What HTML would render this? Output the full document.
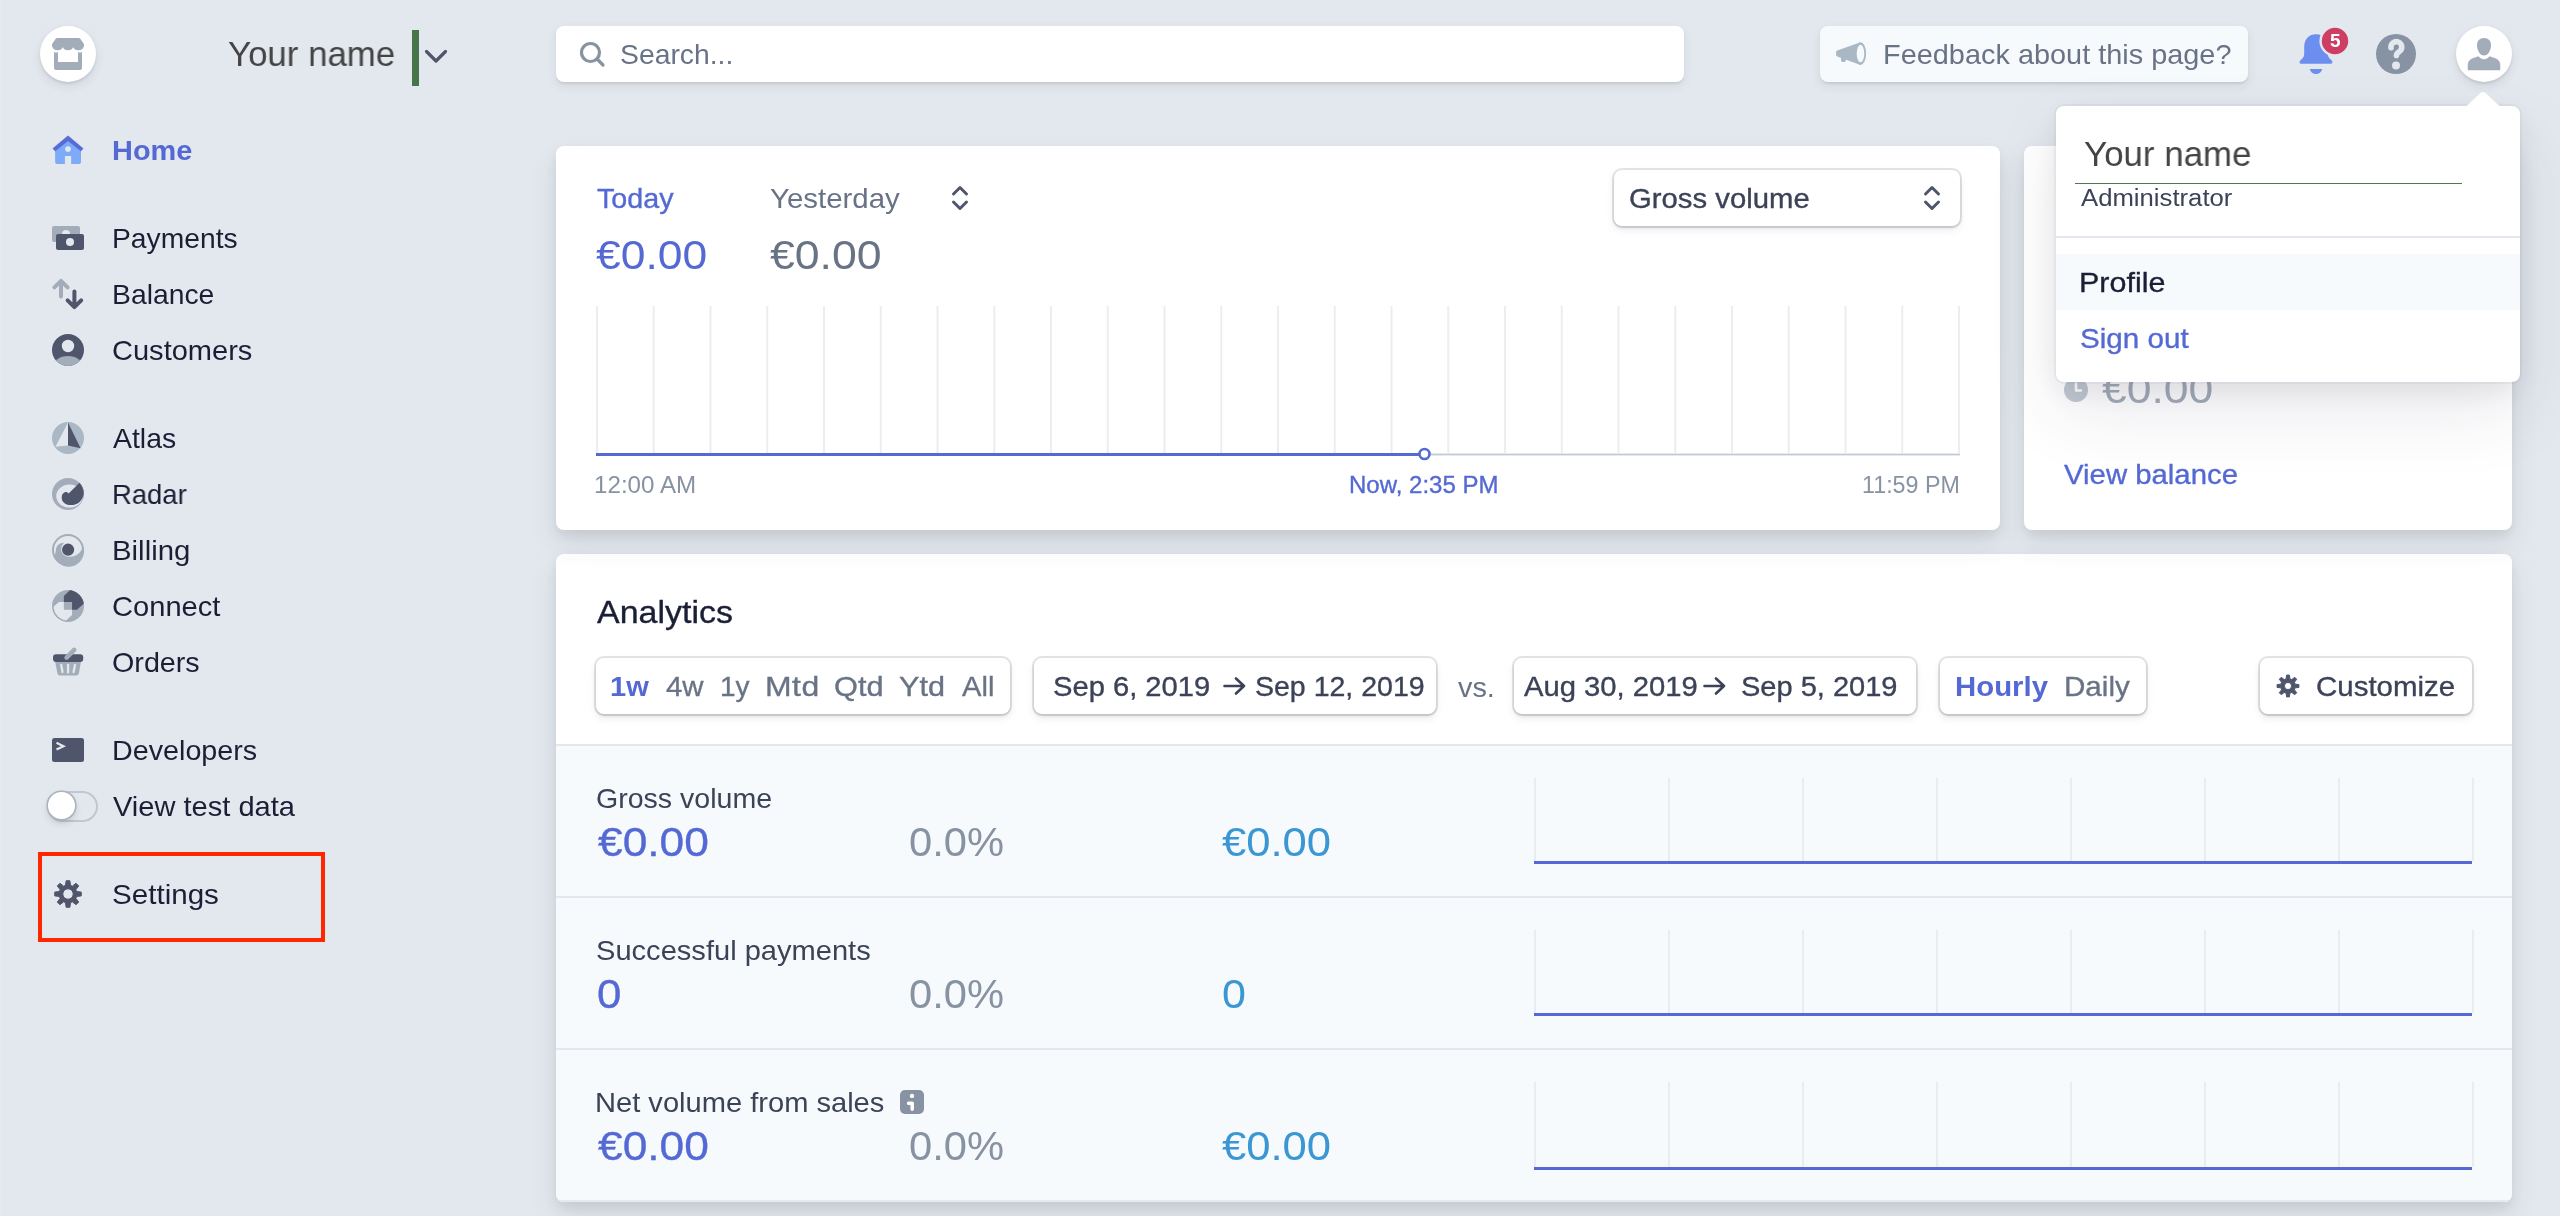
<!DOCTYPE html>
<html><head><meta charset="utf-8"><title>Dashboard</title>
<style>
html,body{margin:0;padding:0}
body{width:2560px;height:1216px;overflow:hidden;background:#e3e8ee;font-family:"Liberation Sans",sans-serif;position:relative}
.t{position:absolute;white-space:pre;line-height:1;transform-origin:0 0;will-change:transform;font-family:"Liberation Sans",sans-serif}
.a{position:absolute}
.card{position:absolute;background:#fff;border-radius:8px;box-shadow:0 14px 28px 0 rgba(60,66,87,.10),0 6px 12px 0 rgba(0,0,0,.07)}
.btn{position:absolute;background:#fff;border-radius:8px;box-shadow:0 0 0 2px rgba(60,66,87,.14),0 4px 8px 0 rgba(60,66,87,.10),0 2px 3px 0 rgba(0,0,0,.10)}
svg{position:absolute;overflow:visible}
</style></head>
<body>
<!-- left edge strip -->
<div class="a" style="left:0;top:0;width:1px;height:1216px;background:#e6e9ed"></div>

<!-- logo circle -->
<div class="a" style="left:40px;top:26px;width:56px;height:56px;border-radius:50%;background:#fff;box-shadow:0 4px 10px 0 rgba(60,66,87,.12),0 2px 2px 0 rgba(0,0,0,.08)"></div>
<svg style="left:52px;top:38px" width="32" height="32" viewBox="0 0 32 32">
<path d="M5.2 0 H26.8 Q27.8 0 28.3 0.8 L31.6 6 V8 H0.4 V6 L3.7 0.8 Q4.2 0 5.2 0 Z" fill="#a3acb9"/>
<ellipse cx="5.6" cy="7.5" rx="5.6" ry="4.8" fill="#a3acb9"/><ellipse cx="16" cy="7.5" rx="5.6" ry="4.8" fill="#a3acb9"/><ellipse cx="26.4" cy="7.5" rx="5.6" ry="4.8" fill="#a3acb9"/>
<path d="M2 14 Q4 15 6 14 V24 H26 V14 Q28 15 30 14 V30 Q30 32 28 32 H4 Q2 32 2 30 Z" fill="#a3acb9"/>
</svg>

<!-- green caret + chevron -->
<div class="a" style="left:412px;top:30px;width:7px;height:56px;background:#47754a"></div>
<svg style="left:424px;top:48px" width="24" height="16" viewBox="0 0 24 16"><path d="M2.5 3.5 L12 13 L21.5 3.5" fill="none" stroke="#4f566b" stroke-width="3.2" stroke-linecap="round" stroke-linejoin="round"/></svg>

<!-- search -->
<div class="a" style="left:556px;top:26px;width:1128px;height:56px;border-radius:8px;background:#fff;box-shadow:0 4px 10px 0 rgba(60,66,87,.10),0 2px 2px 0 rgba(0,0,0,.07)"></div>
<svg style="left:578px;top:40px" width="28" height="28" viewBox="0 0 28 28"><circle cx="12.5" cy="12.5" r="9" fill="none" stroke="#8792a2" stroke-width="3.2"/><path d="M19 19 L25 25" stroke="#8792a2" stroke-width="3.2" stroke-linecap="round"/></svg>

<!-- feedback -->
<div class="a" style="left:1820px;top:26px;width:428px;height:56px;border-radius:8px;background:#f7fafc;box-shadow:0 4px 10px 0 rgba(60,66,87,.10),0 2px 2px 0 rgba(0,0,0,.07)"></div>
<svg style="left:1834px;top:40px" width="36" height="28" viewBox="0 0 36 28">
<path d="M3.2 10.6 L26.5 2.3 V24.9 L3.2 16.4 Q2.1 16 2.1 14.8 V12.2 Q2.1 11 3.2 10.6 Z" fill="#aab7c4"/>
<path d="M7 17 V20.5 Q7 21.9 8.4 21.9 H10.4 Q11.8 21.9 11.8 20.5 V18.5 Z" fill="#aab7c4"/>
<ellipse cx="26.5" cy="13.6" rx="5.6" ry="11.3" fill="#aab7c4"/>
<ellipse cx="26.5" cy="13.6" rx="3.8" ry="8.75" fill="#f7fafc"/>
</svg>
<svg style="left:2296px;top:24px" width="56" height="56" viewBox="0 0 56 56">
<path d="M20 10.2 C12 10.2 8.2 16 8.2 23 V30 C8.2 33 6.5 34.5 4.5 36.2 C2.8 37.8 3.5 39.8 5.8 39.8 H34.2 C36.5 39.8 37.2 37.8 35.5 36.2 C33.5 34.5 31.8 33 31.8 30 V23 C31.8 16 28 10.2 20 10.2 Z" fill="#6c8eef"/>
<path d="M13.8 45 H26.2 C25.4 48.2 23 50 20 50 C17 50 14.6 48.2 13.8 45 Z" fill="#6c8eef"/>
<circle cx="39" cy="17" r="15.6" fill="#e3e8ee"/>
<circle cx="39" cy="17" r="13.2" fill="#cd3d64"/>
</svg>
<span class="t" style="left:2329.6px;top:31.2px;font-size:19px;font-weight:700;color:#fff">5</span>
<svg style="left:2376px;top:34px" width="40" height="40" viewBox="0 0 40 40">
<circle cx="20" cy="20" r="20" fill="#8792a2"/>
<path d="M15 13.8 A5.4 5.4 0 1 1 23.8 17.2 C22 18.6 20.4 19.2 20.4 21.4" fill="none" stroke="#e3e8ee" stroke-width="5.6" stroke-linecap="round" stroke-linejoin="round"/>
<circle cx="20" cy="31.4" r="4" fill="#e3e8ee"/>
</svg>
<!-- avatar -->
<div class="a" style="left:2456px;top:26px;width:56px;height:56px;border-radius:50%;background:#fff;box-shadow:0 4px 10px 0 rgba(60,66,87,.12),0 2px 2px 0 rgba(0,0,0,.08)"></div>
<svg style="left:2464px;top:34px" width="40" height="40" viewBox="0 0 40 40">
<path d="M4 36 V31 C4 27 6.5 25.2 10 24 L14.5 22.6 C16 24.6 18 25.4 20 25.4 C22 25.4 24 24.6 25.5 22.6 L30 24 C33.5 25.2 36 27 36 31 V36 Z" fill="#a3acb9" stroke="#a3acb9" stroke-width="0.5" stroke-linejoin="round"/>
<path d="M20 3.9 C24.4 3.9 27 7 27 11 C27 16.5 24 21.6 20 21.6 C16 21.6 13 16.5 13 11 C13 7 15.6 3.9 20 3.9 Z" fill="#a3acb9"/>
</svg>

<svg style="left:52px;top:134px" width="32" height="32" viewBox="0 0 32 32"><path d="M3.13 17 L16 6.4 L29 17 V28 Q29 30 27 30 H19.16 V22.6 Q19.16 22 18.56 22 H13.52 Q12.92 22 12.92 22.6 V30 H5.13 Q3.13 30 3.13 28 Z" fill="#7dabf8"/>
<path d="M16 1.87 L31.08 14.5 L28.9 17.07 L16 6.8 L3.25 17.07 L0.9 14.5 Z" fill="#556cd6" stroke="#556cd6" stroke-width="0.6" stroke-linejoin="round"/>
<circle cx="16" cy="15" r="2.85" fill="#e3e8ee"/></svg>
<svg style="left:52px;top:222px" width="32" height="32" viewBox="0 0 32 32"><rect x="0" y="4" width="28" height="16" rx="2" fill="#a3acb9"/>
<circle cx="14" cy="12" r="4" fill="#e3e8ee"/>
<rect x="4" y="12" width="28" height="16" rx="2" fill="#4f566b"/>
<circle cx="18" cy="20" r="4" fill="#e3e8ee"/></svg>
<svg style="left:52px;top:278px" width="32" height="32" viewBox="0 0 32 32"><path d="M9 18.4 V3 M2.4 9.4 L9 2.8 L15.6 9.4" fill="none" stroke="#a3acb9" stroke-width="4" stroke-linecap="round" stroke-linejoin="round"/>
<path d="M22.4 13.4 V29 M15.6 22.4 L22.4 29.2 L29.2 22.4" fill="none" stroke="#4f566b" stroke-width="4" stroke-linecap="round" stroke-linejoin="round"/></svg>
<svg style="left:52px;top:334px" width="32" height="32" viewBox="0 0 32 32"><defs><clipPath id="cc"><circle cx="16" cy="16" r="16"/></clipPath></defs>
<circle cx="16" cy="16" r="16" fill="#4f566b"/>
<ellipse cx="16" cy="33" rx="15" ry="11" fill="#a3acb9" clip-path="url(#cc)"/>
<circle cx="16" cy="12" r="6.2" fill="#e3e8ee"/></svg>
<svg style="left:52px;top:422px" width="32" height="32" viewBox="0 0 32 32"><circle cx="16" cy="16" r="16" fill="#aab7c4"/>
<path d="M16 0.5 L3.5 24.8 L16 23.6 Z" fill="#e3e8ee"/>
<path d="M16 0.5 L28.6 26.2 L16 23.6 Z" fill="#4f566b"/></svg>
<svg style="left:52px;top:478px" width="32" height="32" viewBox="0 0 32 32"><circle cx="16" cy="16" r="16" fill="#a3acb9"/>
<ellipse cx="17.6" cy="18.05" rx="13.4" ry="11.55" fill="#e3e8ee"/>
<path d="M27.5 4.8 A16 16 0 0 1 31.8 14.7 C31.5 22 26 27.2 18.6 27.1 C13 27 9.7 23.5 9.7 19.4 C9.7 16.5 11.5 14.2 13.6 14 C15 13.9 16 14.6 16.6 15.6 Z" fill="#4f566b"/></svg>
<svg style="left:52px;top:534px" width="32" height="32" viewBox="0 0 32 32"><circle cx="16" cy="16" r="15" fill="#e3e8ee" stroke="#a3acb9" stroke-width="2"/>
<path d="M12.5 8.8 C8 8.6 3.8 11.5 3.9 16.5 C3.5 19 2.5 21 2.6 23 A15 15 0 0 0 30.9 12 C29.5 18.5 24.5 22.6 18 22.8 C12.5 22.8 9.2 19.5 9.2 15.5 C9.2 12.5 10.5 10.2 12.5 8.8 Z" fill="#a3acb9"/>
<circle cx="16.1" cy="15.7" r="6.1" fill="#4f566b"/></svg>
<svg style="left:52px;top:590px" width="32" height="32" viewBox="0 0 32 32"><defs><clipPath id="cn"><circle cx="16" cy="16" r="16"/></clipPath><clipPath id="cn2"><circle cx="16" cy="16" r="14.4"/></clipPath></defs>
<circle cx="16" cy="16" r="16" fill="#a3acb9"/>
<path d="M6.97 12.1 H11.85 V19.8 H20.06 V24.9 L15.1 29.6 L14 32 H0 V17 L1.4 16.8 Z" fill="#e3e8ee" clip-path="url(#cn2)"/>
<path d="M18.1 0 L11.85 6.1 V12.1 H20.06 V19.8 H24.9 L32 13.4 V0 Z" fill="#4f566b" clip-path="url(#cn)"/></svg>
<svg style="left:52px;top:646px" width="32" height="32" viewBox="0 0 32 32"><path d="M3.1 15.4 H28.95 L26.9 27.2 Q26.5 29.4 24.3 29.4 H8 Q5.8 29.4 5.4 27.2 Z" fill="#a3acb9"/>
<path d="M9.2 18.8 L10.5 26 M16.1 18.8 V26.4 M23 18.8 L21.6 26" stroke="#e3e8ee" stroke-width="2.3" stroke-linecap="round"/>
<rect x="1" y="8.3" width="30.2" height="7.7" rx="3" fill="#4f566b"/>
<path d="M14.6 11.6 L22.2 3.9" stroke="#a3acb9" stroke-width="4.6" stroke-linecap="round"/></svg>
<svg style="left:52px;top:734px" width="32" height="32" viewBox="0 0 32 32"><rect x="0" y="4" width="32" height="24" rx="2.5" fill="#4f566b"/>
<path d="M4.5 8.8 L11.5 12.2 L4.5 15.6" fill="none" stroke="#e3e8ee" stroke-width="2.2" stroke-linejoin="miter"/></svg>
<svg style="left:52px;top:878px" width="32" height="32" viewBox="0 0 32 32"><path d="M13.51 7.35 L14.12 2.73 L17.88 2.73 L18.49 7.35 L20.36 8.13 L24.05 5.29 L26.71 7.95 L23.87 11.64 L24.65 13.51 L29.27 14.12 L29.27 17.88 L24.65 18.49 L23.87 20.36 L26.71 24.05 L24.05 26.71 L20.36 23.87 L18.49 24.65 L17.88 29.27 L14.12 29.27 L13.51 24.65 L11.64 23.87 L7.95 26.71 L5.29 24.05 L8.13 20.36 L7.35 18.49 L2.73 17.88 L2.73 14.12 L7.35 13.51 L8.13 11.64 L5.29 7.95 L7.95 5.29 L11.64 8.13 Z M10.80 16 a5.2 5.2 0 1 0 10.4 0 a5.2 5.2 0 1 0 -10.4 0 Z" fill="#4f566b" fill-rule="evenodd" stroke="#4f566b" stroke-width="1.0" stroke-linejoin="round"/></svg>

<!-- toggle -->
<div class="a" style="left:46.5px;top:790.5px;width:51px;height:31px;border-radius:15.5px;box-sizing:border-box;border:2px solid #bfc7d1;background:#e3e8ee"></div>
<div class="a" style="left:48.3px;top:792.4px;width:26.6px;height:26.6px;border-radius:50%;background:#fff;box-shadow:0 0 0 1.6px #a9b2be,0 4px 7px 0 rgba(60,66,87,.22)"></div>

<!-- red highlight -->
<div class="a" style="left:38px;top:852px;width:287px;height:90px;box-sizing:border-box;border:4.5px solid #ff2600"></div>

<!-- analytics card -->
<div class="card" style="left:556px;top:554px;width:1956px;height:648px;overflow:hidden">
  <div class="a" style="left:0;top:190px;width:1956px;height:458px;background:#f7fafc"></div>
  <div class="a" style="left:0;top:646px;width:1956px;height:2px;background:#e6eaef"></div>
  <div class="a" style="left:0;top:190px;width:1956px;height:2px;background:#e3e8ee"></div>
  <div class="a" style="left:0;top:342px;width:1956px;height:2px;background:#e3e8ee"></div>
  <div class="a" style="left:0;top:494px;width:1956px;height:2px;background:#e3e8ee"></div>
</div>
<!-- card 1 -->
<div class="card" style="left:556px;top:146px;width:1444px;height:384px"></div>
<svg style="left:0;top:0" width="2560" height="600" viewBox="0 0 2560 600"><rect x="596.00" y="306" width="2" height="147" fill="#ebeef1"/><rect x="652.75" y="306" width="2" height="147" fill="#ebeef1"/><rect x="709.50" y="306" width="2" height="147" fill="#ebeef1"/><rect x="766.25" y="306" width="2" height="147" fill="#ebeef1"/><rect x="823.00" y="306" width="2" height="147" fill="#ebeef1"/><rect x="879.75" y="306" width="2" height="147" fill="#ebeef1"/><rect x="936.50" y="306" width="2" height="147" fill="#ebeef1"/><rect x="993.25" y="306" width="2" height="147" fill="#ebeef1"/><rect x="1050.00" y="306" width="2" height="147" fill="#ebeef1"/><rect x="1106.75" y="306" width="2" height="147" fill="#ebeef1"/><rect x="1163.50" y="306" width="2" height="147" fill="#ebeef1"/><rect x="1220.25" y="306" width="2" height="147" fill="#ebeef1"/><rect x="1277.00" y="306" width="2" height="147" fill="#ebeef1"/><rect x="1333.75" y="306" width="2" height="147" fill="#ebeef1"/><rect x="1390.50" y="306" width="2" height="147" fill="#ebeef1"/><rect x="1447.25" y="306" width="2" height="147" fill="#ebeef1"/><rect x="1504.00" y="306" width="2" height="147" fill="#ebeef1"/><rect x="1560.75" y="306" width="2" height="147" fill="#ebeef1"/><rect x="1617.50" y="306" width="2" height="147" fill="#ebeef1"/><rect x="1674.25" y="306" width="2" height="147" fill="#ebeef1"/><rect x="1731.00" y="306" width="2" height="147" fill="#ebeef1"/><rect x="1787.75" y="306" width="2" height="147" fill="#ebeef1"/><rect x="1844.50" y="306" width="2" height="147" fill="#ebeef1"/><rect x="1901.25" y="306" width="2" height="147" fill="#ebeef1"/><rect x="1958.00" y="306" width="2" height="147" fill="#ebeef1"/>
<rect x="1424" y="453.6" width="536" height="1.8" fill="#c1c9d2"/>
<rect x="596" y="453" width="828" height="3" fill="#5469d4"/>
<circle cx="1424.5" cy="454" r="5" fill="#fff" stroke="#5469d4" stroke-width="2.6"/>
</svg>
<svg style="left:950px;top:184px" width="20" height="28" viewBox="0 0 20 28"><path d="M3.5 10 L10 3.5 L16.5 10 M3.5 18 L10 24.5 L16.5 18" fill="none" stroke="#4f566b" stroke-width="3" stroke-linecap="round" stroke-linejoin="round"/></svg>
<div class="btn" style="left:1614px;top:170px;width:346px;height:56px"></div>
<svg style="left:1922px;top:184px" width="20" height="28" viewBox="0 0 20 28"><path d="M3.5 10 L10 3.5 L16.5 10 M3.5 18 L10 24.5 L16.5 18" fill="none" stroke="#4f566b" stroke-width="3" stroke-linecap="round" stroke-linejoin="round"/></svg>

<!-- card 2 -->
<div class="card" style="left:2024px;top:146px;width:488px;height:384px"></div>
<svg style="left:2064px;top:378px" width="24" height="24" viewBox="0 0 24 24"><circle cx="12" cy="12" r="12" fill="#c1c9d2"/><path d="M12 5.5 V12.5 H17" fill="none" stroke="#fff" stroke-width="2.6" stroke-linecap="round" stroke-linejoin="round"/></svg>

<div class="btn" style="left:596px;top:658px;width:414px;height:56px"></div>
<div class="btn" style="left:1034px;top:658px;width:402px;height:56px"></div>
<div class="btn" style="left:1514px;top:658px;width:402px;height:56px"></div>
<div class="btn" style="left:1940px;top:658px;width:206px;height:56px"></div>
<div class="btn" style="left:2260px;top:658px;width:212px;height:56px"></div>
<svg style="left:1223px;top:676px" width="24" height="20" viewBox="0 0 24 20"><path d="M1.5 10 H21 M13 2.5 L21 10 L13 17.5" fill="none" stroke="#3c4257" stroke-width="2.6" stroke-linecap="round" stroke-linejoin="round"/></svg><svg style="left:1703px;top:676px" width="24" height="20" viewBox="0 0 24 20"><path d="M1.5 10 H21 M13 2.5 L21 10 L13 17.5" fill="none" stroke="#3c4257" stroke-width="2.6" stroke-linecap="round" stroke-linejoin="round"/></svg>
<svg style="left:2276px;top:674px" width="24" height="24" viewBox="0 0 24 24"><path d="M10.13 4.84 L10.59 1.09 L13.41 1.09 L13.87 4.84 L15.74 5.61 L18.72 3.29 L20.71 5.28 L18.39 8.26 L19.16 10.13 L22.91 10.59 L22.91 13.41 L19.16 13.87 L18.39 15.74 L20.71 18.72 L18.72 20.71 L15.74 18.39 L13.87 19.16 L13.41 22.91 L10.59 22.91 L10.13 19.16 L8.26 18.39 L5.28 20.71 L3.29 18.72 L5.61 15.74 L4.84 13.87 L1.09 13.41 L1.09 10.59 L4.84 10.13 L5.61 8.26 L3.29 5.28 L5.28 3.29 L8.26 5.61 Z M8.40 12 a3.6 3.6 0 1 0 7.2 0 a3.6 3.6 0 1 0 -7.2 0 Z" fill="#4f566b" fill-rule="evenodd" stroke="#4f566b" stroke-width="1" stroke-linejoin="round"/></svg>
<svg style="left:900px;top:1090px" width="24" height="24" viewBox="0 0 24 24"><rect width="24" height="24" rx="5" fill="#8792a2"/><circle cx="12" cy="5.9" r="2.2" fill="#fff"/><path d="M8.5 13.2 H12.2 V19.3" fill="none" stroke="#fff" stroke-width="3.5" stroke-linecap="round" stroke-linejoin="round"/></svg>
<svg style="left:0;top:0" width="2560" height="1216" viewBox="0 0 2560 1216"><rect x="1534.00" y="778" width="2" height="83" fill="#e9edf1"/><rect x="1668.00" y="778" width="2" height="83" fill="#e9edf1"/><rect x="1802.00" y="778" width="2" height="83" fill="#e9edf1"/><rect x="1936.00" y="778" width="2" height="83" fill="#e9edf1"/><rect x="2070.00" y="778" width="2" height="83" fill="#e9edf1"/><rect x="2204.00" y="778" width="2" height="83" fill="#e9edf1"/><rect x="2338.00" y="778" width="2" height="83" fill="#e9edf1"/><rect x="2472.00" y="778" width="2" height="83" fill="#e9edf1"/><rect x="1534" y="861" width="938" height="3" fill="#5469d4"/><rect x="1534.00" y="930" width="2" height="83" fill="#e9edf1"/><rect x="1668.00" y="930" width="2" height="83" fill="#e9edf1"/><rect x="1802.00" y="930" width="2" height="83" fill="#e9edf1"/><rect x="1936.00" y="930" width="2" height="83" fill="#e9edf1"/><rect x="2070.00" y="930" width="2" height="83" fill="#e9edf1"/><rect x="2204.00" y="930" width="2" height="83" fill="#e9edf1"/><rect x="2338.00" y="930" width="2" height="83" fill="#e9edf1"/><rect x="2472.00" y="930" width="2" height="83" fill="#e9edf1"/><rect x="1534" y="1013" width="938" height="3" fill="#5469d4"/><rect x="1534.00" y="1082" width="2" height="85" fill="#e9edf1"/><rect x="1668.00" y="1082" width="2" height="85" fill="#e9edf1"/><rect x="1802.00" y="1082" width="2" height="85" fill="#e9edf1"/><rect x="1936.00" y="1082" width="2" height="85" fill="#e9edf1"/><rect x="2070.00" y="1082" width="2" height="85" fill="#e9edf1"/><rect x="2204.00" y="1082" width="2" height="85" fill="#e9edf1"/><rect x="2338.00" y="1082" width="2" height="85" fill="#e9edf1"/><rect x="2472.00" y="1082" width="2" height="85" fill="#e9edf1"/><rect x="1534" y="1167" width="938" height="3" fill="#5469d4"/></svg>

<span class="t" style="left:227.8px;top:36.0px;font-size:35px;font-weight:400;color:#444444;transform:scaleX(0.9955)">Your name</span>
<span class="t" style="left:112.2px;top:137.0px;font-size:28px;font-weight:700;color:#5469d4;transform:scaleX(1.0327)">Home</span>
<span class="t" style="left:112.0px;top:225.0px;font-size:28px;font-weight:400;color:#1a1f36;transform:scaleX(1.0090)">Payments</span>
<span class="t" style="left:112.0px;top:281.0px;font-size:28px;font-weight:400;color:#1a1f36;transform:scaleX(1.0112)">Balance</span>
<span class="t" style="left:112.0px;top:337.0px;font-size:28px;font-weight:400;color:#1a1f36;transform:scaleX(1.0368)">Customers</span>
<span class="t" style="left:113.0px;top:425.0px;font-size:28px;font-weight:400;color:#1a1f36;transform:scaleX(1.0148)">Atlas</span>
<span class="t" style="left:112.0px;top:481.0px;font-size:28px;font-weight:400;color:#1a1f36;transform:scaleX(0.9797)">Radar</span>
<span class="t" style="left:111.9px;top:537.0px;font-size:28px;font-weight:400;color:#1a1f36;transform:scaleX(1.0493)">Billing</span>
<span class="t" style="left:112.0px;top:593.0px;font-size:28px;font-weight:400;color:#1a1f36;transform:scaleX(1.0398)">Connect</span>
<span class="t" style="left:112.0px;top:649.0px;font-size:28px;font-weight:400;color:#1a1f36;transform:scaleX(1.0250)">Orders</span>
<span class="t" style="left:111.7px;top:737.0px;font-size:28px;font-weight:400;color:#1a1f36;transform:scaleX(1.0252)">Developers</span>
<span class="t" style="left:113.0px;top:793.0px;font-size:28px;font-weight:400;color:#1a1f36;transform:scaleX(1.0377)">View test data</span>
<span class="t" style="left:111.9px;top:881.0px;font-size:28px;font-weight:400;color:#1a1f36;transform:scaleX(1.0566)">Settings</span>
<span class="t" style="left:619.5px;top:41.0px;font-size:28px;font-weight:400;color:#697386;transform:scaleX(1.0115)">Search...</span>
<span class="t" style="left:1882.9px;top:41.0px;font-size:28px;font-weight:400;color:#697386;transform:scaleX(1.0316)">Feedback about this page?</span>
<span class="t" style="left:597.2px;top:185.0px;font-size:28px;font-weight:400;-webkit-text-stroke:0.35px currentColor;color:#5469d4;transform:scaleX(1.0253)">Today</span>
<span class="t" style="left:770.2px;top:185.0px;font-size:28px;font-weight:400;color:#697386;transform:scaleX(1.0508)">Yesterday</span>
<span class="t" style="left:595.9px;top:235.0px;font-size:41px;font-weight:400;color:#5469d4;transform:scaleX(1.0830)">€0.00</span>
<span class="t" style="left:770.2px;top:235.0px;font-size:41px;font-weight:400;color:#697386;transform:scaleX(1.0875)">€0.00</span>
<span class="t" style="left:1628.5px;top:185.0px;font-size:28px;font-weight:400;-webkit-text-stroke:0.35px currentColor;color:#3c4257;transform:scaleX(1.0462)">Gross volume</span>
<span class="t" style="left:594.1px;top:474.0px;font-size:23px;font-weight:400;color:#8792a2;transform:scaleX(1.0511)">12:00 AM</span>
<span class="t" style="left:1348.9px;top:474.0px;font-size:23px;font-weight:400;-webkit-text-stroke:0.35px currentColor;color:#5469d4;transform:scaleX(1.0443)">Now, 2:35 PM</span>
<span class="t" style="left:1862.0px;top:474.0px;font-size:23px;font-weight:400;color:#8792a2;transform:scaleX(1.0108)">11:59 PM</span>
<span class="t" style="left:2101.9px;top:369.0px;font-size:40px;font-weight:400;color:#a3acb9;transform:scaleX(1.1122)">€0.00</span>
<span class="t" style="left:2064.3px;top:461.0px;font-size:28px;font-weight:400;-webkit-text-stroke:0.35px currentColor;color:#5469d4;transform:scaleX(1.0479)">View balance</span>
<span class="t" style="left:596.6px;top:596.0px;font-size:32px;font-weight:400;-webkit-text-stroke:0.35px currentColor;color:#1a1f36;transform:scaleX(1.0614)">Analytics</span>
<span class="t" style="left:610.2px;top:673.0px;font-size:28px;font-weight:700;color:#5469d4;transform:scaleX(1.0371)">1w</span>
<span class="t" style="left:666.2px;top:673.0px;font-size:28px;font-weight:400;-webkit-text-stroke:0.35px currentColor;color:#697386;transform:scaleX(1.0500)">4w</span>
<span class="t" style="left:720.0px;top:673.0px;font-size:28px;font-weight:400;-webkit-text-stroke:0.35px currentColor;color:#697386;transform:scaleX(0.9929)">1y</span>
<span class="t" style="left:765.0px;top:673.0px;font-size:28px;font-weight:400;-webkit-text-stroke:0.35px currentColor;color:#697386;transform:scaleX(1.1400);letter-spacing:0.43px">Mtd</span>
<span class="t" style="left:833.9px;top:673.0px;font-size:28px;font-weight:400;-webkit-text-stroke:0.35px currentColor;color:#697386;transform:scaleX(1.0977)">Qtd</span>
<span class="t" style="left:898.7px;top:673.0px;font-size:28px;font-weight:400;-webkit-text-stroke:0.35px currentColor;color:#697386;transform:scaleX(1.0925)">Ytd</span>
<span class="t" style="left:961.9px;top:673.0px;font-size:28px;font-weight:400;-webkit-text-stroke:0.35px currentColor;color:#697386;transform:scaleX(1.0400)">All</span>
<span class="t" style="left:1052.7px;top:673.0px;font-size:28px;font-weight:400;-webkit-text-stroke:0.35px currentColor;color:#3c4257;transform:scaleX(1.0406)">Sep 6, 2019</span>
<span class="t" style="left:1254.6px;top:673.0px;font-size:28px;font-weight:400;-webkit-text-stroke:0.35px currentColor;color:#3c4257;transform:scaleX(1.0182)">Sep 12, 2019</span>
<span class="t" style="left:1458.0px;top:674.0px;font-size:28px;font-weight:400;color:#697386;transform:scaleX(1.0303)">vs.</span>
<span class="t" style="left:1524.0px;top:673.0px;font-size:28px;font-weight:400;-webkit-text-stroke:0.35px currentColor;color:#3c4257;transform:scaleX(1.0437)">Aug 30, 2019</span>
<span class="t" style="left:1740.9px;top:673.0px;font-size:28px;font-weight:400;-webkit-text-stroke:0.35px currentColor;color:#3c4257;transform:scaleX(1.0362)">Sep 5, 2019</span>
<span class="t" style="left:1955.0px;top:673.0px;font-size:28px;font-weight:700;color:#5469d4;transform:scaleX(1.0483)">Hourly</span>
<span class="t" style="left:2063.5px;top:673.0px;font-size:28px;font-weight:400;-webkit-text-stroke:0.35px currentColor;color:#697386;transform:scaleX(1.0567)">Daily</span>
<span class="t" style="left:2316.1px;top:673.0px;font-size:28px;font-weight:400;-webkit-text-stroke:0.35px currentColor;color:#3c4257;transform:scaleX(1.0519)">Customize</span>
<span class="t" style="left:595.9px;top:785.0px;font-size:28px;font-weight:400;color:#3c4257;transform:scaleX(1.0193)">Gross volume</span>
<span class="t" style="left:597.9px;top:822.0px;font-size:40px;font-weight:400;-webkit-text-stroke:0.35px currentColor;color:#5469d4;transform:scaleX(1.1071)">€0.00</span>
<span class="t" style="left:909.2px;top:822.0px;font-size:40px;font-weight:400;color:#8792a2;transform:scaleX(1.0421)">0.0%</span>
<span class="t" style="left:1221.9px;top:822.0px;font-size:40px;font-weight:400;color:#3a97d4;transform:scaleX(1.0898)">€0.00</span>
<span class="t" style="left:595.9px;top:937.0px;font-size:28px;font-weight:400;color:#3c4257;transform:scaleX(1.0384)">Successful payments</span>
<span class="t" style="left:596.8px;top:974.0px;font-size:40px;font-weight:400;-webkit-text-stroke:0.35px currentColor;color:#5469d4;transform:scaleX(1.0950)">0</span>
<span class="t" style="left:909.2px;top:974.0px;font-size:40px;font-weight:400;color:#8792a2;transform:scaleX(1.0421)">0.0%</span>
<span class="t" style="left:1221.9px;top:974.0px;font-size:40px;font-weight:400;color:#3a97d4;transform:scaleX(1.0750)">0</span>
<span class="t" style="left:594.8px;top:1089.0px;font-size:28px;font-weight:400;color:#3c4257;transform:scaleX(1.0388)">Net volume from sales</span>
<span class="t" style="left:597.9px;top:1126.0px;font-size:40px;font-weight:400;-webkit-text-stroke:0.35px currentColor;color:#5469d4;transform:scaleX(1.1071)">€0.00</span>
<span class="t" style="left:909.2px;top:1126.0px;font-size:40px;font-weight:400;color:#8792a2;transform:scaleX(1.0421)">0.0%</span>
<span class="t" style="left:1221.9px;top:1126.0px;font-size:40px;font-weight:400;color:#3a97d4;transform:scaleX(1.0898)">€0.00</span>

<!-- popover -->
<div class="a" style="left:2056px;top:106px;width:464px;height:276px;border-radius:8px;background:#fff;box-shadow:0 0 0 2px rgba(136,152,170,.10),0 30px 70px 0 rgba(49,49,93,.10),0 10px 30px 0 rgba(0,0,0,.08)"></div>
<svg style="left:2459.3px;top:90px" width="48" height="18" viewBox="0 0 48 18"><path d="M7 16.5 L21 3.4 Q24 0.6 27 3.4 L41 16.5 Z" fill="#fff"/></svg>
<div class="a" style="left:2075px;top:182.9px;width:387px;height:1.3px;background:#4a7c4e"></div>
<div class="a" style="left:2056px;top:236px;width:464px;height:2px;background:#e3e8ee"></div>
<div class="a" style="left:2056px;top:254px;width:464px;height:56px;background:#f7fafc"></div>
<span class="t" style="left:2083.6px;top:136.0px;font-size:35px;font-weight:400;color:#444444;transform:scaleX(0.9970)">Your name</span>
<span class="t" style="left:2081.1px;top:187.0px;font-size:23.5px;font-weight:400;color:#3c4257;transform:scaleX(1.0935)">Administrator</span>
<span class="t" style="left:2078.5px;top:269.0px;font-size:28px;font-weight:400;-webkit-text-stroke:0.35px currentColor;color:#1a1f36;transform:scaleX(1.0883)">Profile</span>
<span class="t" style="left:2079.6px;top:325.0px;font-size:28px;font-weight:400;-webkit-text-stroke:0.35px currentColor;color:#5469d4;transform:scaleX(1.0578)">Sign out</span>
</body></html>
